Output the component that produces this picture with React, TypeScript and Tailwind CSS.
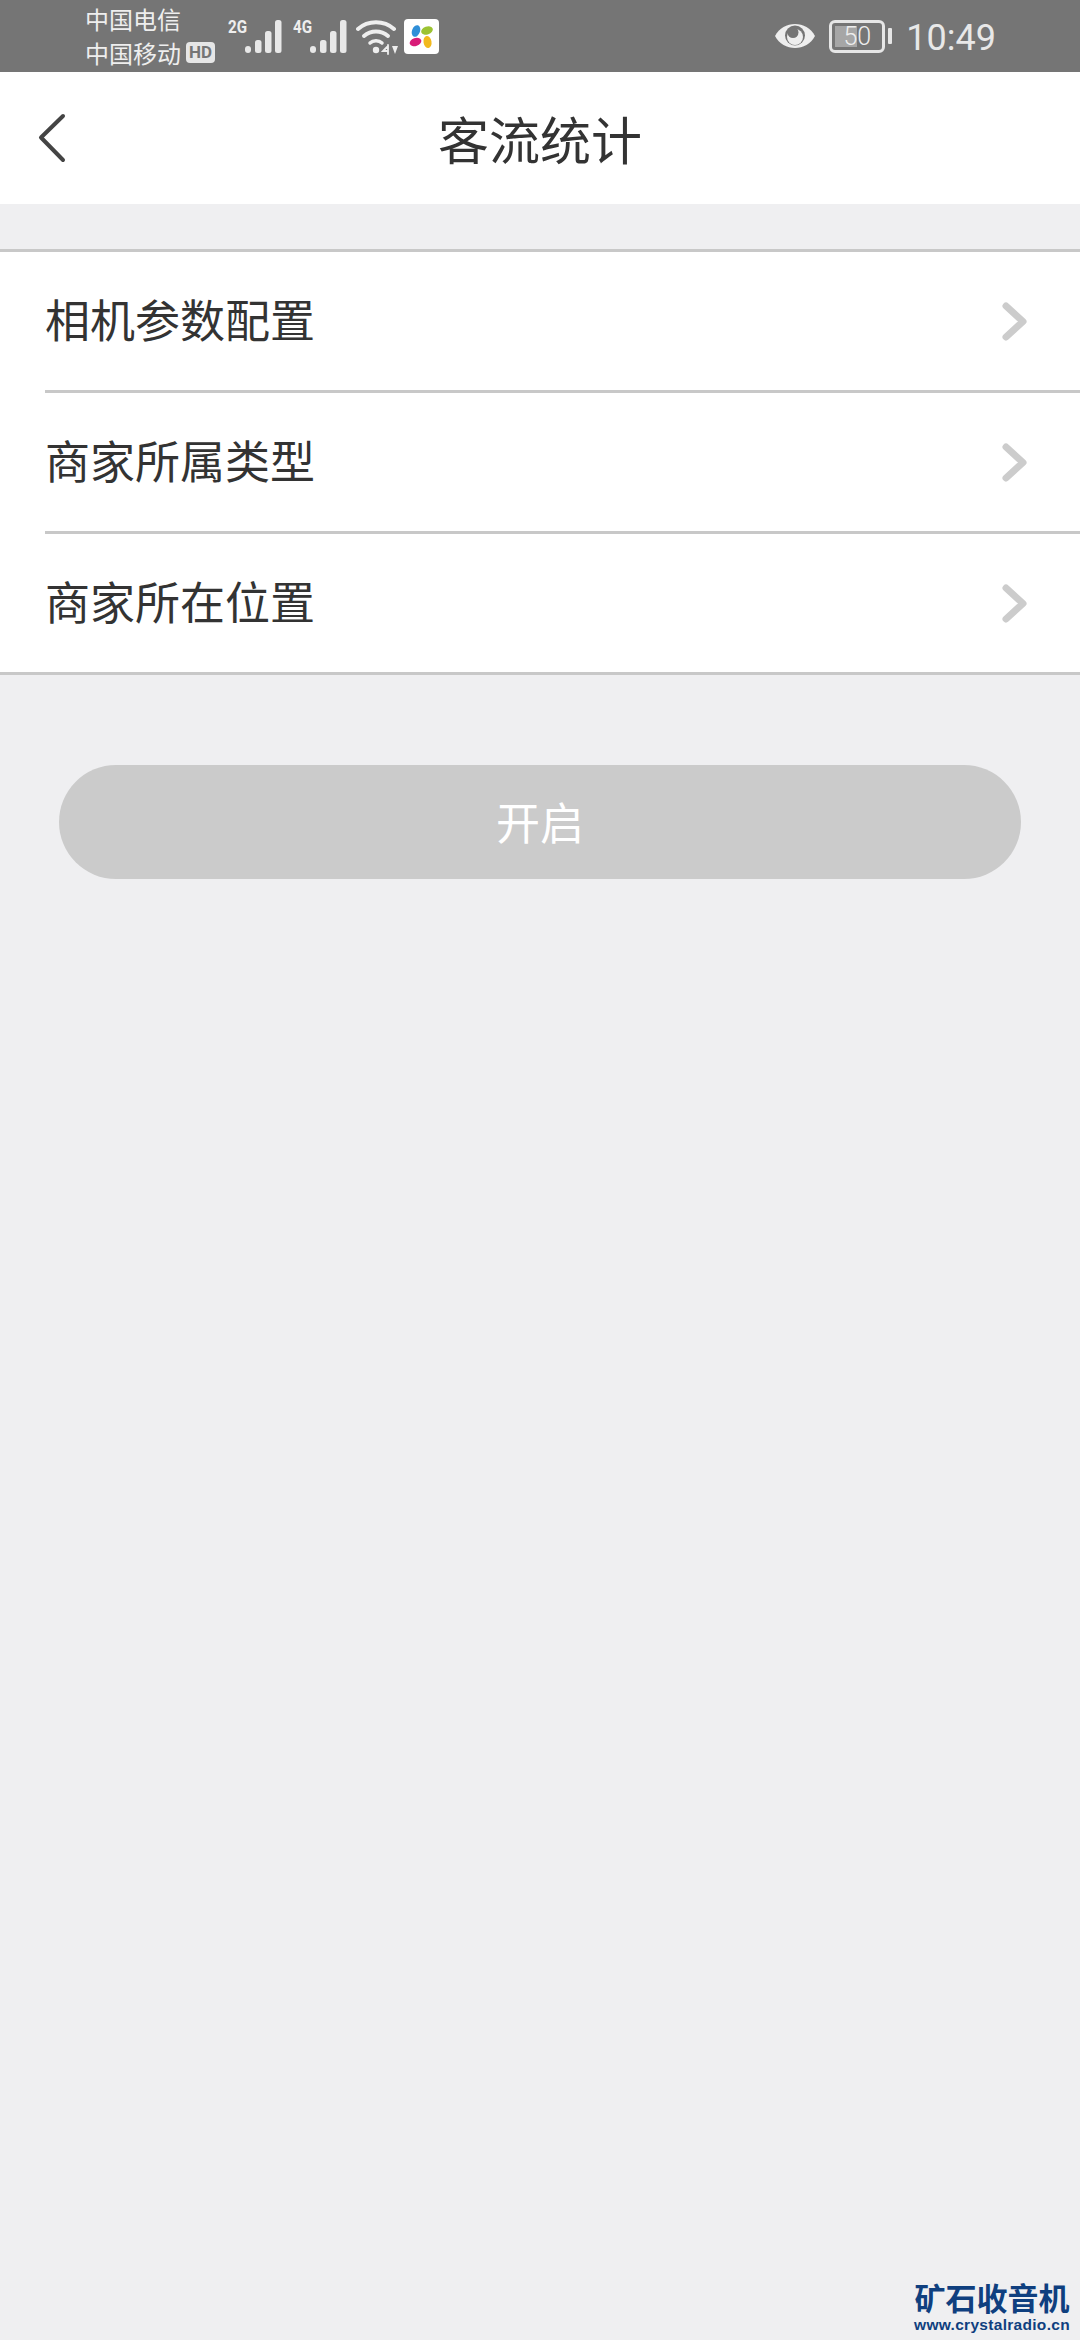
const cjk = 'font-["Noto_Sans_CJK_SC","Noto_Sans",sans-serif]';

const rows = ['相机参数配置', '商家所属类型', '商家所在位置'];

/** Signal strength bars with the network label top-left */
function Signal({ label }: { label: string }) {
  return (
    <div className="relative h-[34px] w-[53px]">
      <span className="absolute left-0 top-[-4px] origin-left font-['Roboto',sans-serif] text-[19px] font-bold leading-[22px] text-[#eeeeee] [transform:scaleX(0.8)]">
        {label}
      </span>
      <svg className="absolute left-[17px] top-0" width="37" height="34" viewBox="0 0 37 34" fill="#e8e8e8">
        <rect x="0" y="26" width="6" height="7" rx="3" />
        <rect x="10" y="20" width="6.5" height="13" rx="2.5" />
        <rect x="20" y="11" width="6.5" height="22" rx="2.5" />
        <rect x="30" y="0" width="6.5" height="33" rx="2.5" />
      </svg>
    </div>
  );
}

function Wifi() {
  return (
    <svg width="42" height="36" viewBox="0 0 42 36" fill="none" stroke="#eeeeee" strokeLinecap="round">
      <path d="M2 10 C12 1 28 1 38 10" strokeWidth="4" />
      <path d="M8 17 C15 11 25 11 32 17" strokeWidth="4" />
      <path d="M14 24 C17 21 23 21 26 24" strokeWidth="3.5" />
      <circle cx="20" cy="31" r="3.2" fill="#eeeeee" stroke="none" />
      <path d="M31 28 L27 32 H32 M32 26 V35" strokeWidth="1.8" />
      <path d="M36 27 H42 L39 35 Z" fill="#eeeeee" stroke="none" />
    </svg>
  );
}

function AppIcon() {
  return (
    <div className="flex h-[35px] w-[35px] items-center justify-center rounded-[4px] bg-white">
      <svg width="25" height="25" viewBox="0 0 25 25">
        <ellipse cx="7" cy="7" rx="4" ry="6" fill="#2f8fd8" transform="rotate(20 7 7)" />
        <ellipse cx="18" cy="6.5" rx="6" ry="4" fill="#9cc332" transform="rotate(-20 18 6.5)" />
        <ellipse cx="6.5" cy="18" rx="6" ry="4" fill="#d81b78" transform="rotate(-20 6.5 18)" />
        <ellipse cx="18.5" cy="18" rx="4" ry="6" fill="#f2b91e" transform="rotate(-10 18.5 18)" />
      </svg>
    </div>
  );
}

function Eye() {
  return (
    <svg width="42" height="26" viewBox="0 0 42 26">
      <path d="M1 13 C9 -3 33 -3 41 13 C33 29 9 29 1 13 Z" fill="#eeeeee" />
      <circle cx="21" cy="12.5" r="10" fill="#757575" />
      <circle cx="21" cy="14" r="8" fill="#eeeeee" />
      <circle cx="19" cy="9.5" r="5.5" fill="#757575" />
    </svg>
  );
}

function Battery() {
  return (
    <div className="flex items-center gap-[3px]">
      <div className="relative flex h-[33px] w-[56px] items-center rounded-[6px] border-[3px] border-[#e6e6e6] p-[3px]">
        <div className="h-full w-[50%] bg-[#a6a6a6]" />
        <span className="absolute inset-0 text-center font-['Roboto',sans-serif] text-[25px] font-light leading-[27px] text-[#eeeeee]">
          50
        </span>
      </div>
      <div className="h-[16px] w-[4px] rounded-[1px] bg-[#e6e6e6]" />
    </div>
  );
}

function StatusBar() {
  return (
    <div className="flex h-[72px] items-center justify-between bg-[#757575] pl-[85px] pr-[85px]">
      <div className="flex items-center">
        <div className={`${cjk} mb-[1px] w-[131px] text-[24px] leading-[34px] text-[#eeeeee]`}>
          <div>中国电信</div>
          <div className="flex items-center gap-[5px]">
            中国移动
            <span className="rounded-[4px] bg-[#e6e6e6] px-[3px] font-['Roboto',sans-serif] text-[17px] font-bold leading-[21px] text-[#757575]">
              HD
            </span>
          </div>
        </div>
        <div className="ml-[12px] mt-[1px] flex items-center">
          <Signal label="2G" />
          <div className="ml-[12px]">
            <Signal label="4G" />
          </div>
          <div className="ml-[10px]">
            <Wifi />
          </div>
          <div className="ml-[6px]">
            <AppIcon />
          </div>
        </div>
      </div>
      <div className="mr-[-1px] flex items-center">
        <Eye />
        <div className="ml-[13px]">
          <Battery />
        </div>
        <span className="ml-[14px] mt-[4px] font-['Roboto',sans-serif] text-[36px] leading-none text-[#e8e8e8]">
          10:49
        </span>
      </div>
    </div>
  );
}

function NavBar() {
  return (
    <div className="relative flex h-[132px] items-center justify-center bg-white">
      {/* back arrow */}
      <svg className="absolute left-[36px] top-[40px]" width="32" height="52" viewBox="0 0 32 52" fill="none">
        <path d="M27 4 L5 25.5 L27 48" stroke="#444444" strokeWidth="4" strokeLinecap="round" strokeLinejoin="round" />
      </svg>
      <span className={`${cjk} text-[51px] leading-none text-[#333333]`}>客流统计</span>
    </div>
  );
}

function Row({ title, last }: { title: string; last: boolean }) {
  return (
    <div className={last ? '' : 'pl-[45px]'}>
      <div
        className={`flex h-[141px] items-center justify-between border-b-[3px] border-[#c8c8c8] pr-[52px] ${last ? 'pl-[45px]' : ''}`}
      >
        <span className={`${cjk} mb-[5px] text-[45px] leading-none text-[#333333]`}>{title}</span>
        <svg width="26" height="40" viewBox="0 0 26 40" fill="none">
          <path d="M4 5 L21 20.5 L4 36" stroke="#cccccc" strokeWidth="7" strokeLinecap="round" strokeLinejoin="round" />
        </svg>
      </div>
    </div>
  );
}

export default function App() {
  return (
    <div className="relative flex h-[2340px] w-[1080px] flex-col bg-[#efeff1]">
      <StatusBar />
      <NavBar />

      {/* settings list */}
      <div className="mt-[45px] border-t-[3px] border-[#c8c8c8] bg-white">
        {rows.map((title, i) => (
          <Row key={title} title={title} last={i === rows.length - 1} />
        ))}
      </div>

      <button
        className={`${cjk} mx-[59px] mt-[90px] flex h-[114px] items-center justify-center rounded-full bg-[#cbcbcb] pb-[3px] text-[44px] text-white`}
      >
        开启
      </button>

      {/* site watermark */}
      <div className="absolute bottom-[5px] right-[9px] flex w-[158px] flex-col items-center">
        <span className={`${cjk} text-[31px] font-bold leading-[36px] text-[#0f3f7f]`}>矿石收音机</span>
        <span className="font-['Liberation_Sans',sans-serif] text-[15.5px] font-bold leading-[20px] tracking-[0.3px] text-[#0f3f7f]">
          www.crystalradio.cn
        </span>
      </div>
    </div>
  );
}
